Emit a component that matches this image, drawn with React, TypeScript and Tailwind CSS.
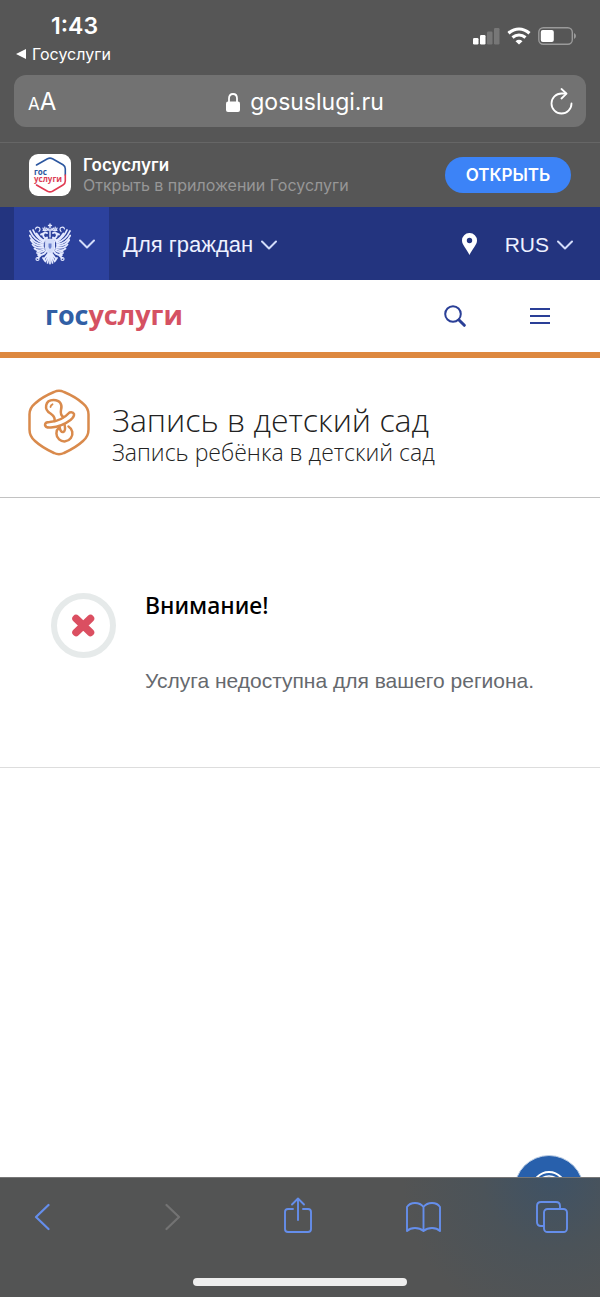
import React from "react";

const ui = "font-['Inter','Liberation_Sans',sans-serif]";
const site = "font-['Liberation_Sans',Arial,sans-serif]";

const ChevronDown = () => (
    <svg className="h-2.5 w-4" viewBox="0 0 16 10" fill="none" stroke="#d3dcfa" strokeWidth="2" strokeLinecap="round" strokeLinejoin="round" aria-hidden="true">
        <path d="M1 1.5 8 8.5 15 1.5" />
    </svg>
);

const WingHalf = () => (
    <g>
        <g strokeWidth="1.8">
            <path d="M14 20Q5 17 1 8" />
            <path d="M14 21.500Q4 20 .8 12.500" />
            <path d="M14 23Q5 23 1.800 17" />
            <path d="M14.500 24.500Q7 26 3.500 21.500" />
            <path d="M15 26Q9 29 5.500 25.500" />
            <path d="M14.500 19Q7 14 4 7" />
            <path d="M15 18Q10 15 7.500 10.500" />
            <path d="M15.500 27.500Q12 30 8.500 28.500" />
        </g>
        <path d="M18 16Q13 14 14.500 11 15.500 8.500 18 10M14.500 10.500 12 11.500M18 14.500 14 18" strokeWidth="1.9" />
        <path d="M14 7.500h3.500M14.500 6.500 14 5M15.800 6.500V4M17 6.500 17.500 5" strokeWidth="1.2" />
        <path d="M6.500 6Q7 3.500 10 4.500 12 6 10 8.500" strokeWidth="1.2" />
        <path d="M18 27Q15 33 9 32M12 32l-3 3M11 31l-3-1" strokeWidth="1.8" />
        <circle cx="8.500" cy="36" r="1.500" strokeWidth="1.2" />
        <path d="M19.500 30 15 36M20 31 16.500 38.500M20.500 32 18.500 40M14 35l2 3" strokeWidth="1.700" />
    </g>
);

const Eagle = () => (
    <svg className="h-[42px] w-[42px]" viewBox="0 0 42 42" fill="none" stroke="#e4e9ff" strokeLinecap="round" aria-hidden="true">
        <WingHalf />
        <g transform="translate(42 0) scale(-1 1)">
            <WingHalf />
        </g>
        <path d="M21 1v4M19.500 2.500h3M18.500 7h5M19 5.500 18.500 7M23 5.500l.5 1.500M21 8.500V14" strokeWidth="1.400" />
        <path d="M16.500 17.500Q21 14.500 25.500 17.500V26Q25 29 21 31 17 29 16.500 26Z" fill="#d3dcfa" strokeWidth="1" />
        <path d="M21 31v9.500" strokeWidth="1.800" />
        <path d="M19.500 20.500h3v3.500q-.5 1.500-1.500 2-1-.5-1.500-2Z" fill="#6f83cf" stroke="none" />
    </svg>
);

const AppIcon = () => (
    <div className="relative flex size-[42px] shrink-0 items-center rounded-[9px] bg-white">
        <svg className="absolute inset-0 size-full" viewBox="0 0 42 42" fill="none" strokeWidth="1.600" strokeLinecap="round" aria-hidden="true">
            <path d="M7.500 11 18.500 4.800q2.500-1.300 5 0L34 10.800q2.300 1.400 2.300 4V21" stroke="#2b569f" />
            <path d="M36.300 21v6q0 2.700-2.300 4l-10.500 6.200q-2.500 1.300-5 0L7.500 31" stroke="#e03a52" />
        </svg>
        <div className="relative ml-[5px] font-['Open_Sans',sans-serif] text-[8px] leading-[7px] font-bold">
            <div className="text-[#2b569f]">гос</div>
            <div className="text-[#dc3d55]">услуги</div>
        </div>
    </div>
);

const StatusBar = () => (
    <div className="flex h-[75px] justify-between pr-6 pl-4 text-white">
        <div>
            <div className="mt-3 pl-[35px] text-[23px] leading-7 font-semibold">1:43</div>
            <a href="#" className="mt-1 flex items-center gap-1.5 text-[16px] leading-5">
                <svg className="h-2.5 w-2.5" viewBox="0 0 10 10" fill="white" aria-hidden="true">
                    <path d="M0 5 10 0V10Z" />
                </svg>
                Госуслуги
            </a>
        </div>
        <div className="mt-[26px] flex h-5 items-center gap-[7px]">
            <svg className="h-[18px] w-7" viewBox="0 0 28 18" fill="white" aria-hidden="true">
                <rect x="1" y="11" width="5.500" height="6.500" rx="1.200" />
                <rect x="8" y="8" width="5.500" height="9.500" rx="1.200" />
                <rect x="15" y="4.500" width="5.500" height="13" rx="1.200" fillOpacity=".2" />
                <rect x="22" y="1" width="5.500" height="16.500" rx="1.200" fillOpacity=".2" />
            </svg>
            <svg className="h-[18px] w-6" viewBox="0 0 24 18" fill="none" stroke="white" strokeWidth="3.200" aria-hidden="true">
                <path d="M1.500 6.200Q6.500 2 12 2t10.500 4.200" />
                <path d="M5.500 10.500Q8.500 8 12 8t6.500 2.500" />
                <path d="M8.500 14.200Q12 11.500 15.500 14.200L12 17.500Z" fill="white" stroke="none" />
            </svg>
            <svg className="h-[18px] w-[38px]" viewBox="0 0 38 18" fill="none" aria-hidden="true">
                <rect x=".8" y=".8" width="33.500" height="16.400" rx="4.500" stroke="#9a9a9a" strokeWidth="1.400" />
                <rect x="2.800" y="3" width="13" height="12" rx="2" fill="white" />
                <path d="M36 6q2 1 2 3t-2 3Z" fill="#9a9a9a" />
            </svg>
        </div>
    </div>
);

const AddressBar = () => (
    <div className="mx-3.5 flex h-[52px] items-center justify-between rounded-xl bg-[#727272] pr-3 pl-3.5 text-white">
        <button type="button" aria-label="Размер текста" className="flex w-8 items-baseline pt-1 leading-8">
            <span className="text-[17px]">A</span>
            <span className="text-[24px]">A</span>
        </button>
        <a href="#" className="flex items-center gap-2.5 pt-0.5 text-[23px] leading-8">
            <svg className="h-[19px] w-3.5" viewBox="0 0 14 19" fill="none" aria-hidden="true">
                <path d="M3 9V5.500Q3 1 7 1t4 4.500V9" stroke="white" strokeWidth="1.800" />
                <rect x="0" y="8.500" width="14" height="10.500" rx="2" fill="white" />
            </svg>
            gosuslugi.ru
        </a>
        <button type="button" aria-label="Обновить">
            <svg className="h-[27px] w-6" viewBox="0 0 24 27" fill="none" stroke="white" strokeWidth="1.800" strokeLinecap="round" strokeLinejoin="round" aria-hidden="true">
                <path d="M21.500 15.500A10 10 0 1 1 11.500 5.500h4.500" />
                <path d="M11.500 1l5 4.700-5 4.800" />
            </svg>
        </button>
    </div>
);

const AppBanner = () => (
    <div className="flex h-[65px] items-center border-t border-[#666] pr-[29px] pl-[29px]">
        <AppIcon />
        <div className="ml-3 flex-1">
            <div className="text-[17px] leading-5 font-semibold text-white">Госуслуги</div>
            <div className="text-[16px] leading-5 text-[#979797]">Открыть в приложении Госуслуги</div>
        </div>
        <button type="button" className="h-9 w-[126px] rounded-full bg-[#3c83f7] pt-px text-[17px] font-semibold text-white">
            ОТКРЫТЬ
        </button>
    </div>
);

const SiteNav = () => (
    <nav className={`${site} flex h-[73px] items-center bg-[#23347f] pr-[27px] pl-3.5 text-[22px] text-[#eef1ff]`}>
        <button type="button" aria-label="Государственные сайты" className="flex h-full w-[95px] items-center gap-2 bg-[#2c419d] pl-[15px]">
            <Eagle />
            <ChevronDown />
        </button>
        <button type="button" className="ml-3.5 flex items-center gap-2 pt-0.5">
            Для граждан
            <ChevronDown />
        </button>
        <button type="button" aria-label="Выбрать регион" className="ml-auto">
            <svg className="h-[22px] w-[15px]" viewBox="0 0 15 22" fill="white" aria-hidden="true">
                <path fillRule="evenodd" d="M7.500 0A7.400 7.400 0 0 0 0 7.500C0 12 4.500 15.500 7.500 22 10.500 15.500 15 12 15 7.500A7.400 7.400 0 0 0 7.500 0Zm0 4.800a2.700 2.700 0 1 1 0 5.400 2.700 2.700 0 0 1 0-5.400Z" />
            </svg>
        </button>
        <button type="button" className="ml-7 flex items-center gap-2 pt-0.5 text-[21px]">
            RUS
            <ChevronDown />
        </button>
    </nav>
);

const LogoBar = () => (
    <div className="flex h-[78px] items-center border-b-[6px] border-[#dd883f] pr-[50px] pl-[45px] text-[#2a3f97]">
        <a href="#" className="pb-0.5 font-['Open_Sans',sans-serif] text-[27px] leading-9 font-bold text-[#315fa5]">
            гос<span className="text-[#d55162]">услуги</span>
        </a>
        <button type="button" aria-label="Поиск" className="ml-auto">
            <svg className="size-[22px]" viewBox="0 0 22 22" fill="none" stroke="currentColor" strokeLinecap="round" aria-hidden="true">
                <circle cx="9" cy="9" r="7.800" strokeWidth="2" />
                <path d="M15 15l5.300 5.300" strokeWidth="3" />
            </svg>
        </button>
        <button type="button" aria-label="Меню" className="ml-16">
            <svg className="h-[18px] w-5" viewBox="0 0 20 18" stroke="currentColor" strokeWidth="2" aria-hidden="true">
                <path d="M0 2h20M0 9h20M0 16h20" />
            </svg>
        </button>
    </div>
);

const ServiceTitle = () => (
    <div className="flex h-[140px] border-b border-[#c2c2c2] pl-7 font-['Open_Sans','Noto_Sans',sans-serif] font-light text-[#222]">
        <svg className="mt-[31px] h-[67px] w-[62px] shrink-0" viewBox="0 0 62 67" fill="none" stroke="#d98a4c" strokeWidth="2.500" strokeLinecap="round" strokeLinejoin="round" aria-hidden="true">
            <path d="M26 3q5-2.500 10 0 12 5 19 11.500 5.500 4.500 5.500 11v15q0 7-5.500 11.500Q48 58.500 36 64q-5 2.500-10 0Q14 58.500 7 52 1.500 47.500 1.500 40.500v-15q0-6.500 5.500-11Q14 8 26 3Z" />
            <path d="M26.500 32Q27.500 28 22.500 24.500C15.500 20.500 17 11 25.500 11c7 0 9 5 7.500 10Q32 26 35.500 28" />
            <path d="M22.500 18q.3-2 2-2.700" strokeWidth="1.800" />
            <path d="M41.500 23.500Q45 22.500 46 25q.5 2.500-3.500 6Q34 37.500 23 38.500q-5.500.5-6-2.500 0-3 4.500-3Q34 32 41.500 23.500Z" />
            <path d="M31 38.500A8 8 0 1 0 40.500 37.500" />
            <path d="M31.500 37.800q1 5.700 3.700 5.200 2.800-.8 1.300-7.800" />
        </svg>
        <div className="ml-[22px] mt-[42px]">
            <h1 className="text-[32px] leading-[40px]">Запись в детский сад</h1>
            <p className="text-[23px] leading-6">Запись ребёнка в детский сад</p>
        </div>
    </div>
);

const Notice = () => (
    <div className="flex h-[270px] border-b border-[#ddd] pt-[95px] pr-8 pl-[51px]">
        <svg className="size-[65px] shrink-0" viewBox="0 0 65 65" fill="none" aria-hidden="true">
            <circle cx="32.500" cy="32.500" r="29.500" stroke="#e6eaea" strokeWidth="6" />
            <path d="M25 25.500 39.500 39.500M39.500 25.500 25 39.500" stroke="#db4f61" strokeWidth="7.500" strokeLinecap="round" />
        </svg>
        <div className="ml-[29px]">
            <h2 className="font-['Noto_Sans',sans-serif] text-[23px] leading-6 font-medium text-black">Внимание!</h2>
            <p className={`${site} mt-[52px] text-[21px] leading-6 text-[#66696e]`}>Услуга недоступна для вашего региона.</p>
        </div>
    </div>
);

const ToolBar = () => (
    <footer className="h-[120px] border-t border-[#777] bg-[#535454] bg-[radial-gradient(circle_at_92%_0%,#3f5265_0,#4b5359_70px,transparent_150px)]">
        <div className="flex h-[78px] items-center justify-between pr-8 pl-[34px] text-[#658eeb]">
            <button type="button" aria-label="Назад">
                <svg className="h-7 w-4" viewBox="0 0 16 28" fill="none" stroke="currentColor" strokeWidth="2.200" strokeLinecap="round" strokeLinejoin="round">
                    <path d="M14.500 2 2 14l12.500 12" />
                </svg>
            </button>
            <button type="button" aria-label="Вперёд" disabled className="ml-5 text-[#737373]">
                <svg className="h-7 w-4" viewBox="0 0 16 28" fill="none" stroke="currentColor" strokeWidth="2.200" strokeLinecap="round" strokeLinejoin="round">
                    <path d="M1.500 2 14 14 1.500 26" />
                </svg>
            </button>
            <button type="button" aria-label="Поделиться" className="ml-2 pb-1">
                <svg className="h-[36px] w-[28px]" viewBox="0 0 28 36" fill="none" stroke="currentColor" strokeWidth="1.900" strokeLinecap="round" strokeLinejoin="round">
                    <path d="M9 12H4q-3 0-3 3v17q0 3 3 3h20q3 0 3-3V15q0-3-3-3h-5" />
                    <path d="M14 23V2M8 7.500 14 1.500l6 6" />
                </svg>
            </button>
            <button type="button" aria-label="Закладки">
                <svg className="h-[30px] w-[35px]" viewBox="0 0 35 30" fill="none" stroke="currentColor" strokeWidth="1.900" strokeLinejoin="round">
                    <path d="M17.500 5Q14.500 1 9 1T1 5v24q3-3 8-3t8.500 3q3.500-3 8.500-3t8 3V5q-2.500-4-8-4t-8.500 4v24" />
                </svg>
            </button>
            <button type="button" aria-label="Вкладки">
                <svg className="size-8" viewBox="0 0 32 32" fill="none" stroke="currentColor" strokeWidth="1.900" strokeLinejoin="round">
                    <rect x="8" y="8" width="23" height="23" rx="3.500" />
                    <path d="M8 25H5q-4 0-4-4V5q0-4 4-4h15q4 0 4 4v3" />
                </svg>
            </button>
        </div>
        <div className="mx-auto mt-[22px] h-2 w-[214px] rounded-full bg-[#eee]" />
    </footer>
);

const App = () => {
    return (
        <div className={`${ui} flex min-h-screen flex-col bg-white`}>
            <header className="bg-[#565656]">
                <StatusBar />
                <AddressBar />
                <div className="h-[15px]" />
                <AppBanner />
            </header>
            <SiteNav />
            <main className="relative flex-1 overflow-hidden">
                <LogoBar />
                <ServiceTitle />
                <Notice />
                <button type="button" aria-label="Помощь" className="absolute right-4 -bottom-12 flex size-[70px] items-center justify-center rounded-full border border-[#b8cbe3] bg-[#2860ac]">
                    <svg className="h-10 w-9" viewBox="0 0 36 40" fill="none" stroke="white" strokeWidth="2" aria-hidden="true">
                        <ellipse cx="18" cy="20" rx="17" ry="18" />
                        <ellipse cx="18" cy="21" rx="14" ry="15" strokeWidth="1.500" />
                    </svg>
                </button>
            </main>
            <ToolBar />
        </div>
    );
};

export default App;
